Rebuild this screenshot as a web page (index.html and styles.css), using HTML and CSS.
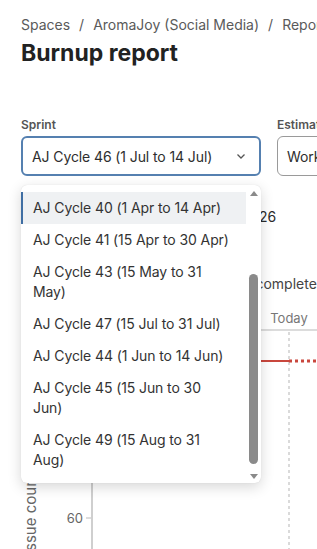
FILE: index.html
```html
<!DOCTYPE html>
<html>
<head>
    <title>Burnup report</title>
    <link rel="stylesheet" href="styles.css">
</head>
<body>
    <div class="page">
        <div class="breadcrumbs">
            <span>Spaces</span><span class="sep">/</span><span>AromaJoy (Social Media)</span><span class="sep">/</span><span>Reports</span>
        </div>
        <h1>Burnup report</h1>

        <div class="filters">
            <div class="field sprint-field">
                <label>Sprint</label>
                <div class="select focused">
                    <span>AJ Cycle 46 (1 Jul to 14 Jul)</span>
                    <svg class="chevron" width="12" height="12" viewBox="0 0 12 12"><path d="M2.5 4.5 L6 8 L9.5 4.5" fill="none" stroke="#555" stroke-width="1.3"/></svg>
                </div>
            </div>
            <div class="field estimate-field">
                <label>Estimation</label>
                <div class="select">
                    <span>Work item count</span>
                </div>
            </div>
        </div>

        <div class="summary">Work items done in the sprint: 14 of 26</div>

        <div class="legend">
            <span class="dot scope"></span>Total scope of sprint
            <span class="dot done"></span>Work complete
        </div>

        <svg class="chart" width="317" height="260" viewBox="0 300 317 260">
            <text x="289" y="323" text-anchor="middle" class="today">Today</text>
            <line x1="92" y1="330" x2="317" y2="330" stroke="#dcdcdc" stroke-width="2"/>
            <line x1="289" y1="332" x2="289" y2="560" stroke="#b5b5b5" stroke-width="1" stroke-dasharray="3 3"/>
            <line x1="92" y1="361" x2="289" y2="361" stroke="#c9473d" stroke-width="2"/>
            <line x1="289" y1="361" x2="317" y2="361" stroke="#c9473d" stroke-width="3" stroke-dasharray="3 3"/>
            <line x1="92" y1="331" x2="92" y2="560" stroke="#cfcfcf" stroke-width="2"/>
            <line x1="86" y1="518" x2="91" y2="518" stroke="#bbb" stroke-width="1"/>
            <text x="83" y="523" text-anchor="end" class="tick">60</text>
            <text transform="translate(36 555) rotate(-90)" class="axis-label">Issue count</text>
        </svg>
    </div>

    <div class="menu">
        <ul class="options">
            <li class="active">AJ Cycle 40 (1 Apr to 14 Apr)</li>
            <li>AJ Cycle 41 (15 Apr to 30 Apr)</li>
            <li>AJ Cycle 43 (15 May to 31 May)</li>
            <li>AJ Cycle 47 (15 Jul to 31 Jul)</li>
            <li>AJ Cycle 44 (1 Jun to 14 Jun)</li>
            <li>AJ Cycle 45 (15 Jun to 30 Jun)</li>
            <li>AJ Cycle 49 (15 Aug to 31 Aug)</li>
        </ul>
        <div class="scrollbar">
            <svg width="10" height="8" viewBox="0 0 10 8"><path d="M1 7 L5 2 L9 7 Z" fill="#8a8a8a"/></svg>
            <div class="track"><div class="thumb"></div></div>
            <svg width="10" height="8" viewBox="0 0 10 8"><path d="M1 1 L5 6 L9 1 Z" fill="#8a8a8a"/></svg>
        </div>
    </div>
</body>
</html>
```

FILE: styles.css
```css
body {
    margin: 0;
    background: #fff;
    font-family: Inter, "Noto Sans", sans-serif;
    color: #2b2b2b;
    overflow: hidden;
}
.page {
    padding: 16px 0 0 21px;
    white-space: nowrap;
}
.breadcrumbs {
    font-size: 14px;
    line-height: 18px;
    color: #5a5a5a;
}
.sep {
    margin: 0 9px;
}
h1 {
    margin: 4px 0 0 0;
    font-size: 23px;
    line-height: 30px;
    font-weight: 700;
    color: #222;
}
.filters {
    display: flex;
    gap: 16px;
    margin-top: 49px;
}
.field label {
    display: block;
    font-size: 12px;
    font-weight: 600;
    color: #555;
    line-height: 16px;
    margin-bottom: 3px;
}
.sprint-field {
    width: 240px;
    flex: none;
}
.estimate-field {
    flex: none;
    width: 200px;
}
.select {
    box-sizing: border-box;
    height: 40px;
    border: 1px solid #9a9a9a;
    border-radius: 6px;
    display: flex;
    align-items: center;
    justify-content: space-between;
    padding: 0 9px 0 9px;
    font-size: 14px;
    letter-spacing: -0.1px;
    color: #2e2e2e;
}
.select.focused {
    border: 2px solid #5580b0;
    padding: 0 12px 0 9px;
}
.summary {
    margin-top: 31px;
    font-size: 14px;
    line-height: 20px;
}
.legend {
    margin-top: 48px;
    font-size: 14px;
    line-height: 18px;
    color: #444;
    display: flex;
    align-items: center;
}
.dot {
    flex: none;
    width: 10px;
    height: 10px;
    border-radius: 50%;
    margin-right: 6px;
}
.dot.scope {
    background: #c9473d;
}
.dot.done {
    background: #4a7fc0;
    margin-left: 28px;
}
.chart {
    display: block;
    position: absolute;
    left: 0;
    top: 300px;
}
.today {
    font-size: 13px;
    fill: #777;
    font-family: Inter, sans-serif;
}
.tick {
    font-size: 13px;
    fill: #666;
    font-family: Inter, sans-serif;
}
.axis-label {
    font-size: 15px;
    fill: #666;
    font-family: Inter, sans-serif;
}
.menu {
    position: absolute;
    left: 21px;
    top: 185px;
    width: 240px;
    height: 298px;
    background: #fff;
    border-radius: 6px;
    box-shadow: 0 4px 14px rgba(0,0,0,0.16), 0 0 1px rgba(0,0,0,0.15);
    display: flex;
    overflow: hidden;
}
.options {
    list-style: none;
    margin: 0;
    padding: 7px 0 0 0;
    width: 225px;
    flex: none;
}
.options li {
    padding: 6px 15px 6px 10px;
    font-size: 14px;
    letter-spacing: -0.1px;
    line-height: 20px;
    color: #333;
    border-left: 2px solid transparent;
}
.options li.active {
    background: #eff1f3;
    border-left-color: #3f6ea3;
}
.scrollbar {
    flex: 1;
    display: flex;
    flex-direction: column;
    align-items: center;
    padding: 4px 0 2px 0;
}
.track {
    flex: 1;
    width: 9px;
    display: flex;
    flex-direction: column;
    justify-content: flex-end;
    padding: 3px 0 9px 0;
}
.thumb {
    height: 190px;
    background: #8a8a8a;
    border-radius: 5px;
}
```
